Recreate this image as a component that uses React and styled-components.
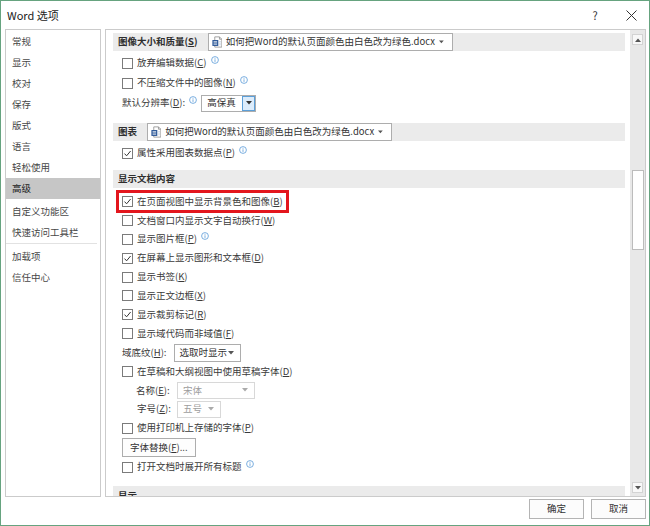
import React from 'react'
import styled, { createGlobalStyle } from 'styled-components'

const GlobalStyle = createGlobalStyle`
  html, body {
    margin: 0;
    padding: 0;
    background: #fff;
  }
  body {
    font-family: "Noto Sans CJK SC", "Noto Sans", sans-serif;
  }
  * {
    box-sizing: border-box;
  }
`

const Window = styled.div`
  width: 650px;
  height: 526px;
  border: 1px solid #66a37f;
  background: #fff;
  display: flex;
  flex-direction: column;
  color: #3a3a3a;
  font-size: 9.5px;
  line-height: 1;
`

const TitleBar = styled.div`
  height: 28px;
  flex-shrink: 0;
  display: flex;
  align-items: center;
  padding-left: 6px;
`

const Title = styled.div`
  flex: 1;
  font-size: 11px;
  color: #1b1b1b;
`

const TitleButton = styled.div`
  width: 36px;
  height: 28px;
  display: flex;
  align-items: center;
  justify-content: center;
  font-size: 11px;
  color: #333;
`

const Body = styled.div`
  flex: 1;
  min-height: 0;
  display: flex;
  gap: 4px;
  padding: 0 3px 0 4px;
`

const Nav = styled.nav`
  width: 96px;
  flex-shrink: 0;
  border: 1px solid #cbcbcb;
  padding-top: 1px;
  display: flex;
  flex-direction: column;
`

const NavItem = styled.div`
  height: 21px;
  display: flex;
  align-items: center;
  padding-left: 6px;
  margin-bottom: ${p => (p.$active ? '2px' : '0')};
  color: ${p => (p.$active ? '#222' : '#474747')};
  background: ${p => (p.$active ? '#c6c6c6' : 'transparent')};
`

const NavSeparator = styled.div`
  height: 1px;
  margin: 0 3px 2px 0;
  background: #e2e2e2;
`

const Panel = styled.div`
  flex: 1;
  display: flex;
  border: 1px solid #cbcbcb;
  overflow: hidden;
`

const Content = styled.div`
  flex: 1;
  min-width: 0;
  padding: 3px 5px 0 7px;
  overflow: hidden;
`

const SectionHeader = styled.div`
  height: 18px;
  display: flex;
  align-items: center;
  gap: 10px;
  padding-left: 5px;
  margin-top: ${p => p.$top || 0}px;
  margin-bottom: ${p => p.$bottom || 2}px;
  background: #ebebeb;
  color: #2e2e2e;
  font-weight: bold;
`

const DocSelect = styled.div`
  width: 245px;
  height: 18px;
  display: flex;
  align-items: center;
  gap: 4px;
  padding: 0 8px 0 3px;
  border: 1px solid #adadad;
  background: #fff;
  font-weight: normal;
  color: #333;
  white-space: nowrap;
`

const DocName = styled.span`
  flex: 1;
`

const Row = styled.div`
  height: ${p => p.$h}px;
  display: flex;
  align-items: center;
  padding-left: ${p => 9 + (p.$indent || 0)}px;
  white-space: nowrap;
`

const Box = styled.span`
  width: 11px;
  height: 11px;
  flex-shrink: 0;
  margin-right: 4px;
  border: 1px solid #7b7b7b;
  background: #fff;
  display: flex;
  align-items: center;
  justify-content: center;
`

const Marked = styled.span`
  display: inline-flex;
  align-items: center;
  height: 23px;
  margin-left: -6px;
  padding: 0 3px;
  border: 3px solid #e3161d;
`

const Info = styled.svg`
  margin-left: 4px;
  flex-shrink: 0;
  transform: translateY(-3px);
`

const FieldLabel = styled.span`
  width: ${p => (p.$w ? `${p.$w}px` : 'auto')};
  margin-right: ${p => p.$gap || 0}px;
`

const Select = styled.div`
  width: ${p => p.$w}px;
  height: ${p => p.$hgt || 18}px;
  margin-left: ${p => p.$left || 0}px;
  display: flex;
  align-items: center;
  justify-content: space-between;
  padding-left: 5px;
  padding-right: ${p => (p.$button ? 0 : 6)}px;
  border: 1px solid ${p => (p.$disabled ? '#d8d8d8' : '#adadad')};
  background: #fff;
  color: ${p => (p.$disabled ? '#9d9d9d' : '#333')};
`

const DropButton = styled.span`
  width: 13px;
  height: 100%;
  display: flex;
  align-items: center;
  justify-content: center;
  border: 1px solid #5c9fd8;
  background: #dcecfb;
`

const PushButton = styled.div`
  height: 19px;
  display: inline-flex;
  align-items: center;
  padding: 0 7px;
  border: 1px solid #adadad;
  background: #fdfdfd;
  color: #333;
`

const ScrollBar = styled.div`
  width: 15px;
  flex-shrink: 0;
  display: flex;
  flex-direction: column;
  align-items: center;
  background: #e8e8e8;
`

const ScrollArrow = styled.div`
  width: 11px;
  height: 11px;
  margin: ${p => (p.$down ? '0 0 3px' : '4px 0 0')};
  display: flex;
  align-items: center;
  justify-content: center;
  border: 1px solid #d3d3d3;
  background: #f8f8f8;
`

const Thumb = styled.div`
  width: 12px;
  height: 80px;
  margin-top: 125px;
  border: 1px solid #bcbcbc;
  background: #fff;
`

const TrackRest = styled.div`
  flex: 1;
`

const Footer = styled.div`
  height: 28px;
  flex-shrink: 0;
  display: flex;
  justify-content: flex-end;
  gap: 7px;
  padding: 2px 3px 0 0;
`

const DialogButton = styled.div`
  width: 55px;
  height: 20px;
  display: flex;
  align-items: center;
  justify-content: center;
  border: 1px solid #b4b4b4;
  background: #fcfcfc;
  color: #333;
`

const Check = ({ on }) => (
  <Box>
    {on && (
      <svg width="9" height="9" viewBox="0 0 9 9">
        <path d="M1.5 4.6 L3.6 6.8 L7.6 2" fill="none" stroke="#333" strokeWidth="1" />
      </svg>
    )}
  </Box>
)

const InfoIcon = () => (
  <Info width="8" height="8" viewBox="0 0 8 8">
    <circle cx="4" cy="4" r="3.4" fill="none" stroke="#5b9bd8" strokeWidth="0.8" />
    <rect x="3.6" y="3.3" width="0.8" height="2.6" fill="#5b9bd8" />
    <rect x="3.6" y="1.9" width="0.8" height="0.8" fill="#5b9bd8" />
  </Info>
)

const Caret = ({ color = '#555', up }) => (
  <svg width="6" height="4" viewBox="0 0 6 4">
    <path d={up ? 'M0 4 L3 0.5 L6 4 Z' : 'M0 0 L6 0 L3 3.5 Z'} fill={color} />
  </svg>
)

const WordDoc = () => (
  <svg width="13" height="14" viewBox="0 0 13 14">
    <path d="M3.5 0.5 H9.5 L12.5 3.5 V13.5 H3.5 Z" fill="#fff" stroke="#8c8c8c" />
    <path d="M9.5 0.5 V3.5 H12.5" fill="none" stroke="#8c8c8c" />
    <rect x="0.5" y="4.5" width="7.5" height="7.5" fill="#2b5797" />
    <path d="M2 6.5 H6.5 M2 8.2 H6.5 M2 9.9 H6.5" stroke="#fff" strokeWidth="0.9" />
    <path d="M9 6.5 H11.5 M9 8.5 H11.5 M9 10.5 H11.5" stroke="#b8c7dd" strokeWidth="0.8" />
  </svg>
)

const docName = '如何把Word的默认页面颜色由白色改为绿色.docx'

const navTop = ['常规', '显示', '校对', '保存', '版式', '语言', '轻松使用']
const navMid = ['自定义功能区', '快速访问工具栏']
const navBottom = ['加载项', '信任中心']

const R = 18.9

const App = () => {
  return (
    <>
      <GlobalStyle />
      <Window>
        <TitleBar>
          <Title>Word 选项</Title>
          <TitleButton>?</TitleButton>
          <TitleButton>
            <svg width="11" height="11" viewBox="0 0 11 11">
              <path d="M0.5 0.5 L10.5 10.5 M10.5 0.5 L0.5 10.5" stroke="#333" strokeWidth="1" />
            </svg>
          </TitleButton>
        </TitleBar>

        <Body>
          <Nav>
            {navTop.map(n => (
              <NavItem key={n}>{n}</NavItem>
            ))}
            <NavItem $active>高级</NavItem>
            {navMid.map(n => (
              <NavItem key={n}>{n}</NavItem>
            ))}
            <NavSeparator />
            {navBottom.map(n => (
              <NavItem key={n}>{n}</NavItem>
            ))}
          </Nav>

          <Panel>
            <Content>
              <SectionHeader>
                <span>图像大小和质量(<u>S</u>)</span>
                <DocSelect>
                  <WordDoc />
                  <DocName>{docName}</DocName>
                  <Caret />
                </DocSelect>
              </SectionHeader>
              <Row $h={20}>
                <Check />
                放弃编辑数据(<u>C</u>)
                <InfoIcon />
              </Row>
              <Row $h={20}>
                <Check />
                不压缩文件中的图像(<u>N</u>)
                <InfoIcon />
              </Row>
              <Row $h={20}>
                默认分辨率(<u>D</u>):
                <InfoIcon />
                <Select $w={55} $hgt={17} $left={4} $button>
                  高保真
                  <DropButton>
                    <Caret color="#333" />
                  </DropButton>
                </Select>
              </Row>

              <SectionHeader $top={10}>
                <span>图表</span>
                <DocSelect>
                  <WordDoc />
                  <DocName>{docName}</DocName>
                  <Caret />
                </DocSelect>
              </SectionHeader>
              <Row $h={20}>
                <Check on />
                属性采用图表数据点(<u>P</u>)
                <InfoIcon />
              </Row>

              <SectionHeader $top={7} $bottom={4}>
                <span>显示文档内容</span>
              </SectionHeader>
              <Row $h={R}>
                <Marked>
                  <Check on />
                  在页面视图中显示背景色和图像(<u>B</u>)
                </Marked>
              </Row>
              <Row $h={R}>
                <Check />
                文档窗口内显示文字自动换行(<u>W</u>)
              </Row>
              <Row $h={R}>
                <Check />
                显示图片框(<u>P</u>)
                <InfoIcon />
              </Row>
              <Row $h={R}>
                <Check on />
                在屏幕上显示图形和文本框(<u>D</u>)
              </Row>
              <Row $h={R}>
                <Check />
                显示书签(<u>K</u>)
              </Row>
              <Row $h={R}>
                <Check />
                显示正文边框(<u>X</u>)
              </Row>
              <Row $h={R}>
                <Check on />
                显示裁剪标记(<u>R</u>)
              </Row>
              <Row $h={R}>
                <Check />
                显示域代码而非域值(<u>F</u>)
              </Row>
              <Row $h={R}>
                <FieldLabel $gap={7}>域底纹(<u>H</u>):</FieldLabel>
                <Select $w={67}>
                  选取时显示
                  <Caret />
                </Select>
              </Row>
              <Row $h={R}>
                <Check />
                在草稿和大纲视图中使用草稿字体(<u>D</u>)
              </Row>
              <Row $h={R} $indent={14}>
                <FieldLabel $w={41}>名称(<u>E</u>):</FieldLabel>
                <Select $w={78} $hgt={17} $disabled>
                  宋体
                  <Caret color="#aaa" />
                </Select>
              </Row>
              <Row $h={R} $indent={15}>
                <FieldLabel $w={40}>字号(<u>Z</u>):</FieldLabel>
                <Select $w={44} $hgt={17} $disabled>
                  五号
                  <Caret color="#aaa" />
                </Select>
              </Row>
              <Row $h={R}>
                <Check />
                使用打印机上存储的字体(<u>P</u>)
              </Row>
              <Row $h={20}>
                <PushButton>字体替换(<u>F</u>)...</PushButton>
              </Row>
              <Row $h={R}>
                <Check />
                打开文档时展开所有标题
                <InfoIcon />
              </Row>
              <SectionHeader $top={10}>
                <span>显示</span>
              </SectionHeader>
            </Content>

            <ScrollBar>
              <ScrollArrow>
                <Caret up color="#555" />
              </ScrollArrow>
              <Thumb />
              <TrackRest />
              <ScrollArrow $down>
                <Caret color="#555" />
              </ScrollArrow>
            </ScrollBar>
          </Panel>
        </Body>

        <Footer>
          <DialogButton>确定</DialogButton>
          <DialogButton>取消</DialogButton>
        </Footer>
      </Window>
    </>
  )
}

export default App
